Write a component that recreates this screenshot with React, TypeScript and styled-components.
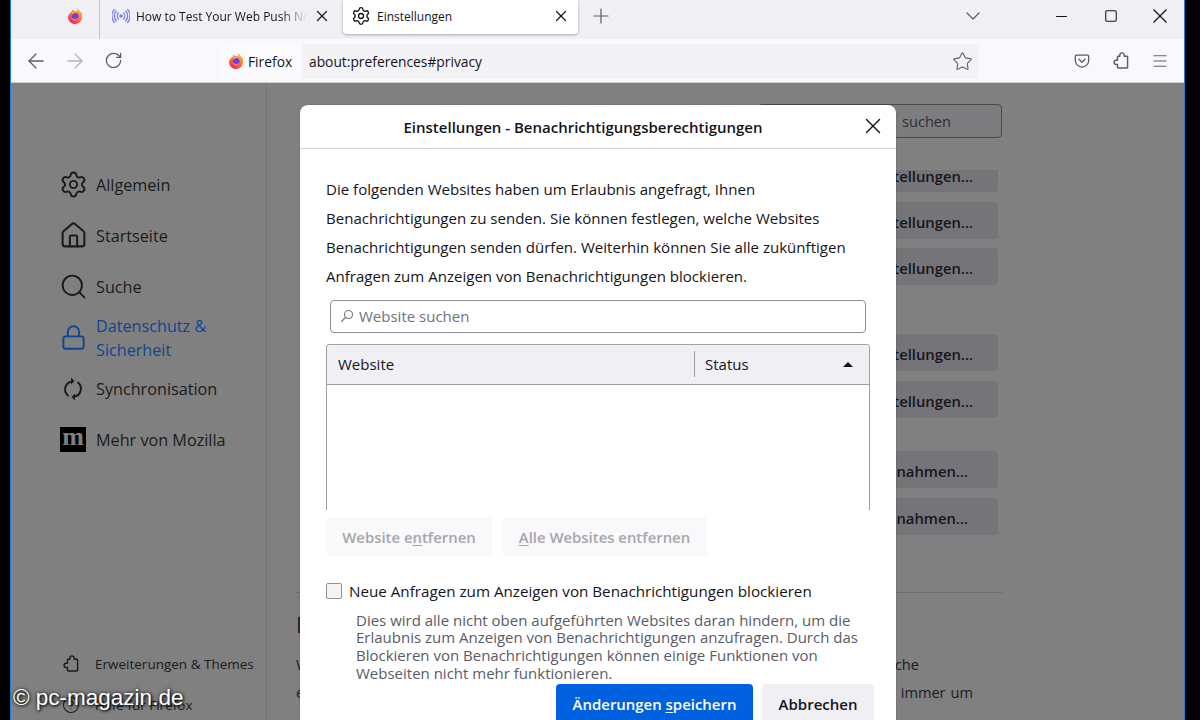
import React from 'react';
import styled, { createGlobalStyle } from 'styled-components';
import { ArrowLeft, ArrowRight, RotateCw, Settings, Star, Menu, X, Plus, ChevronDown, House, Search, Lock, CircleHelp, Minus, Square } from 'lucide-react';

const Global = createGlobalStyle`
  html, body { margin: 0; padding: 0; width: 1200px; height: 720px; overflow: hidden; background: #000; }
  body { font-family: "Open Sans", "Noto Sans", sans-serif; color: #15141a; }
  * { box-sizing: border-box; }
  svg { flex: none; }
`;

const Screen = styled.div`
  position: relative; width: 1200px; height: 720px; overflow: hidden; background: #000;
  padding: 0 15px 0 10px;
`;
const Win = styled.div`
  width: 100%; height: 100%; display: flex; flex-direction: column; overflow: hidden;
  border-left: 1px solid #1f7fd0; border-right: 1px solid #1f7fd0;
`;
const TabStrip = styled.div`
  height: 39px; flex: none; background: #f0f0f4; display: flex; align-items: flex-start; padding-left: 39px;
`;
const PinnedTab = styled.div`
  width: 50px; height: 39px; display: flex; align-items: center; justify-content: center; padding-bottom: 7px;
  border-right: 1px solid #c4c4c8;
`;
const Tab = styled.div<{ $active?: boolean; $w: number }>`
  width: ${p => p.$w}px; height: 34px; display: flex; align-items: center; gap: 6px; padding: 0 ${p => (p.$active ? 8 : 12)}px 2px ${p => (p.$active ? 8 : 12)}px;
  font-size: 12px; color: #15141a;
  background: ${p => (p.$active ? '#fff' : 'transparent')};
  border-radius: ${p => (p.$active ? '0 0 4px 4px' : '0')};
  box-shadow: ${p => (p.$active ? '0 1px 3px rgba(0,0,0,.3)' : 'none')};
`;
const TabLabel = styled.span<{ $fade?: boolean }>`
  flex: 1; white-space: nowrap; overflow: hidden;
  ${p => p.$fade ? 'mask-image: linear-gradient(to right, #000 85%, transparent 100%);' : ''}
`;
const NewTab = styled.div`
  width: 46px; height: 32px; display: flex; align-items: center; justify-content: center; color: #5b5b66;
`;
const StripSpacer = styled.div`flex: 1;`;
const WinButton = styled.div<{ $w?: number }>`
  width: ${p => p.$w ?? 49}px; height: 32px; display: flex; align-items: center; justify-content: center; color: #15141a;
`;
const ListAll = styled(WinButton)`color: #5b5b66; margin-right: 48px;`;

const Toolbar = styled.div`
  height: 44px; flex: none; background: #f9f9fb; display: flex; align-items: center;
  border-bottom: 1px solid #d0d0d4; padding: 0 0 0 6px;
`;
const NavButton = styled.div<{ $dim?: boolean }>`
  width: 38.5px; height: 32px; display: flex; align-items: center; justify-content: center;
  color: ${p => (p.$dim ? '#b4b4b8' : '#5b5b66')};
`;
const UrlBar = styled.div`
  margin-left: 86.5px; width: 760px; height: 35px; background: #f3f3f6; border-radius: 4px;
  display: flex; align-items: center; font-size: 13.8px; margin-top: 1px;
`;
const Identity = styled.div`
  width: 83px; height: 35px; background: #fbfbfd; border-radius: 4px; display: flex; align-items: center; gap: 4px; padding-left: 9px;
  font-size: 13.8px;
`;
const UrlText = styled.span`flex: 1; padding-left: 7px;`;
const StarSlot = styled.div`
  width: 34px; display: flex; justify-content: center; color: #5b5b66;
`;
const ToolIcons = styled.div`
  display: flex; margin-left: 83px; color: #5b5b66;
`;
const ToolIcon = styled.div`
  width: 39px; height: 32px; display: flex; align-items: center; justify-content: center;
`;

const Content = styled.div`
  flex: 1; min-height: 0; display: flex; background: #808080; color: #1b1b1d; overflow: hidden;
`;
const Sidebar = styled.nav`
  width: 256px; flex: none; border-right: 1px solid #747474; padding: 76px 0 0 49px;
`;
const NavItem = styled.div<{ $active?: boolean }>`
  height: 51px; display: flex; align-items: center; gap: 10px; font-size: 16.2px; line-height: 24px;
  color: ${p => (p.$active ? '#0f4592' : '#1b1b1d')};
`;
const NavIcon = styled.div`
  width: 26px; height: 26px; flex: none; display: flex; align-items: center; justify-content: center;
`;
const MozBadge = styled.div`
  width: 26px; height: 25px; background: #000; color: #808080; display: flex; align-items: center; justify-content: center;
  font: 700 26px/20px "Liberation Serif", serif; padding-bottom: 5px;
`;
const SideFooter = styled.div`margin-top: 178px; padding-left: 2px;`;
const FootItem = styled.div`
  height: 41px; display: flex; align-items: center; gap: 15px; font-size: 13.5px; white-space: nowrap;
`;

const Main = styled.main`
  width: 735px; flex: none; padding: 21px 0 0 29px; display: flex; flex-direction: column; align-items: flex-end;
`;
const SearchBox = styled.div`
  width: 244px; height: 34px; flex: none; border: 1px solid #4a4a4e; border-radius: 4px; background: #7d7d7f;
  display: flex; align-items: center; justify-content: flex-end; padding-right: 50px; font-size: 14.6px; color: #2e2e32;
`;
const GhostButton = styled.div<{ $clipped?: boolean; $mt?: number; $pr?: number }>`
  width: 132px; flex: none; margin-right: 4px; height: ${p => (p.$clipped ? 22 : 37)}px; margin-top: ${p => p.$mt ?? 10}px;
  background: #757579; border-radius: ${p => (p.$clipped ? '0 0 4px 4px' : '4px')};
  display: flex; align-items: ${p => (p.$clipped ? 'flex-start' : 'center')}; justify-content: flex-end; padding: ${p => (p.$clipped ? 1 : 2)}px ${p => p.$pr ?? 25}px 0 0;
  font-size: 14.8px; font-weight: 600; color: #16161a; white-space: nowrap; line-height: 10px; overflow: hidden;
`;
const Rule = styled.div`
  width: 100%; flex: none; height: 1px; background: #6c6c6c; margin-top: 57px;
`;
const SectionTitle = styled.h2`
  align-self: flex-start; flex: none; margin: 17px 0 0; font-size: 21px; line-height: 30px; font-weight: 400; white-space: nowrap; color: #1b1b1d;
`;
const BodyLine = styled.div<{ $w: number; $mt: number }>`
  align-self: flex-start; flex: none; width: ${p => p.$w}px; margin-top: ${p => p.$mt}px; font-size: 14.6px; line-height: 20px;
  text-align: justify; text-align-last: justify; white-space: nowrap; color: #1b1b1d;
`;

const Dialog = styled.section`
  position: absolute; left: 300px; top: 105px; width: 596px; height: 640px; background: #fff; border-radius: 8px 8px 0 0;
  box-shadow: 0 0 2px rgba(0,0,0,.25); color: #15141a; overflow: hidden;
`;
const DialogHead = styled.header`
  position: relative; height: 44px; display: flex; align-items: center; justify-content: center; padding-right: 30px;
  border-bottom: 1px solid #cfcfd8; font-size: 15px; font-weight: 600;
`;
const CloseSpot = styled.div`
  position: absolute; right: 13px; top: 11px; width: 20px; height: 20px; display: flex; align-items: center; justify-content: center;
`;
const DialogBody = styled.div`
  padding: 25.5px 26px 0; display: flex; flex-direction: column; align-items: flex-start;
`;
const Intro = styled.p`
  margin: 0; font-size: 15.05px; line-height: 29px; white-space: nowrap;
`;
const FilterField = styled.div`
  margin: 9px 0 0 4px; width: 536px; height: 33px; border: 1px solid #8f8f9d; border-radius: 4px; display: flex; align-items: center;
  padding-left: 9px; gap: 5px; font-size: 15px; color: #72727c;
`;
const Tree = styled.div`
  margin-top: 11px; width: 544px; height: 166px; border: 1px solid #9e9ea6; border-bottom: 0; border-radius: 4px 4px 0 0; overflow: hidden;
`;
const TreeHead = styled.div`
  height: 40px; background: #f0f0f4; border-bottom: 1px solid #9e9ea6; display: grid; grid-template-columns: 368px 1fr; align-items: center;
  font-size: 15px;
`;
const ColWebsite = styled.div`
  height: 26px; line-height: 26px; padding-left: 11px; border-right: 1px solid #9e9ea6;
`;
const ColStatus = styled.div`
  padding: 0 16px 0 10px; display: flex; align-items: center; justify-content: space-between;
`;
const SortArrow = styled.div`
  width: 0; height: 0; border-left: 5px solid transparent; border-right: 5px solid transparent; border-bottom: 5px solid #15141a;
`;
const ButtonRow = styled.div`
  margin-top: 7px; display: flex; gap: 10px;
`;
const DisabledButton = styled.div<{ $w: number }>`
  width: ${p => p.$w}px; height: 39px; background: #f9f9fb; border-radius: 4px; display: flex; align-items: center; justify-content: center;
  color: #a6a6ac; font-size: 14.9px; font-weight: 600; padding-top: 1px;
`;
const Key = styled.span`text-decoration: underline; text-underline-offset: 2px;`;
const CheckRow = styled.label`
  margin-top: 22px; height: 27px; display: flex; align-items: center; gap: 7px; font-size: 15.2px; white-space: nowrap;
`;
const CheckBox = styled.div`
  width: 16px; height: 16px; border: 1px solid #8f8f9d; border-radius: 2px; background: #f4f4f6;
`;
const Description = styled.p`
  margin: 7px 0 0 30px; font-size: 15px; line-height: 17.7px; color: #5b5b66; white-space: nowrap;
`;
const DialogFooter = styled.footer`
  align-self: flex-end; margin: 2px -4px 0 0; display: flex; gap: 9px;
`;
const PrimaryButton = styled.div`
  width: 197px; height: 39px; background: #0061e0; color: #fff; border-radius: 4px; display: flex; align-items: center; justify-content: center;
  font-size: 14.95px; font-weight: 600;
`;
const SecondaryButton = styled.div`
  width: 112px; height: 39px; background: #f0f0f4; border-radius: 4px; display: flex; align-items: center; justify-content: center;
  font-size: 15px; font-weight: 600;
`;
const Watermark = styled.div`
  position: absolute; left: 13px; top: 684px; font: 400 22.5px/28px "Liberation Sans", Arial, sans-serif; color: #fff;
  text-shadow: 1px 1px 3px #000, 0 0 4px rgba(0,0,0,.7); white-space: nowrap;
`;

const Firefox: React.FC<{ size?: number }> = ({ size = 16 }) => (
  <svg width={size} height={size} viewBox="0 0 16 16">
    <defs>
      <linearGradient id="ffo" x1="0.8" y1="0" x2="0.2" y2="1">
        <stop offset="0" stopColor="#ffbd4f" />
        <stop offset=".5" stopColor="#ff7139" />
        <stop offset="1" stopColor="#f5156c" />
      </linearGradient>
    </defs>
    <path d="M14.900 5.400c-.3-.8-1-1.700-1.500-2 .4.800.7 1.600.8 2.100-.9-2.200-2.300-3-3.500-4.900-.1-.1-.1-.2-.2-.3-.7 1.200-.3 2.600.2 3.200C9.800 3 8.700 2.800 7.800 3.100 6.900 2.600 6.100 2.500 5.400 1.500c-.4.500-.5 1.300-.4 1.900-.6.300-1.200.900-1.500 1.300C2 5.500.9 8 1.100 10c.5 3.400 3.400 6 6.900 6 3.900 0 7-3.100 7-7 0-1.300-.3-2.600-.1-3.600z" fill="url(#ffo)" />
    <circle cx="8.200" cy="8.500" r="3.400" fill="#6f3fe2" />
    <path d="M4.400 9c.3 2.100 2.100 3.400 3.900 3.200 1.600-.2 2.800-1.400 3.100-2.900-.8 1.300-2.400 2-4 1.600C6.200 10.600 5 9.900 4.400 9z" fill="#ff9640" />
    <path d="M5 4.500c1.200-.6 2.800-.5 4 .4-1.300-.1-2.700.300-3 1.500-.8-.4-1-1.200-1-1.900z" fill="#ffb03a" />
  </svg>
);
const Broadcast = () => (
  <svg width="18" height="18" viewBox="0 0 18 18" fill="none" stroke="#7b7bf0" strokeWidth="1.300" strokeLinecap="round">
    <circle cx="9" cy="9" r="1.700" fill="#7b7bf0" stroke="none" />
    <path d="M6.400 6a4.300 4.300 0 0 0 0 6M11.600 6a4.300 4.300 0 0 1 0 6" />
    <path d="M4.300 4a7.200 7.200 0 0 0 0 10M13.700 4a7.200 7.200 0 0 1 0 10" />
    <path d="M2.400 2.400a9.800 9.800 0 0 0 0 13.200M15.600 2.400a9.800 9.800 0 0 1 0 13.200" />
  </svg>
);
const Pocket = () => (
  <svg width="16" height="16" viewBox="0 0 16 16" fill="none" stroke="currentColor" strokeWidth="1.300" strokeLinecap="round" strokeLinejoin="round">
    <path d="M2.500 2.200h11c.7 0 1.200.5 1.200 1.200v4a6.700 6.700 0 0 1-13.400 0v-4c0-.7.5-1.200 1.200-1.200z" />
    <path d="M5 6.300l3 2.900 3-2.900" />
  </svg>
);
const Puzzle: React.FC<{ size?: number }> = ({ size = 18 }) => (
  <svg width={size} height={size} viewBox="0 0 18 18" fill="none" stroke="currentColor" strokeWidth="1.400" strokeLinejoin="round" strokeLinecap="round">
    <path d="M7.800 4.300V3.100a2.200 2.200 0 0 1 4.400 0v1.200h2.700c.4 0 .7.300.7.700v10.300c0 .4-.3.700-.7.700H6.200c-.4 0-.7-.3-.7-.7v-2.800H4.200a2.100 2.100 0 0 1 0-4.200h1.300V5c0-.4.300-.7.700-.7z" />
  </svg>
);
const Sync = () => (
  <svg width="26" height="26" viewBox="0 0 26 26" fill="none" stroke="currentColor" strokeWidth="2" strokeLinecap="round">
    <path d="M8 19.500A8 8 0 0 1 12 5.400" />
    <path d="M18 6.500a8 8 0 0 1-4 14.100" />
    <path d="M11 1.500l3.500 3.500-3.500 3.500z" fill="currentColor" stroke="none" />
    <path d="M15 24.500L11.500 21l3.500-3.500z" fill="currentColor" stroke="none" />
  </svg>
);
const MagnifierSmall = () => (
  <svg width="14" height="14" viewBox="0 0 14 14" fill="none" stroke="#72727c" strokeWidth="1.100" strokeLinecap="round">
    <circle cx="8.500" cy="5.500" r="4" />
    <path d="M5.500 8.500L1.500 12.500" />
  </svg>
);

export default function App() {
  return (
    <Screen>
      <Global />
      <Win>
        <TabStrip>
          <PinnedTab><Firefox /></PinnedTab>
          <Tab $w={243}>
            <Broadcast />
            <TabLabel $fade>How to Test Your Web Push Notifications</TabLabel>
            <X size={18} strokeWidth={1.6} />
          </Tab>
          <Tab $active $w={235}>
            <Settings size={20} strokeWidth={1.6} />
            <TabLabel>Einstellungen</TabLabel>
            <X size={18} strokeWidth={1.6} />
          </Tab>
          <NewTab><Plus size={24} strokeWidth={1.2} /></NewTab>
          <StripSpacer />
          <ListAll $w={32}><ChevronDown size={24} strokeWidth={1.2} /></ListAll>
          <WinButton><Minus size={17} strokeWidth={1.6} /></WinButton>
          <WinButton><Square size={14} strokeWidth={1.8} /></WinButton>
          <WinButton><X size={24} strokeWidth={1.3} /></WinButton>
        </TabStrip>
        <Toolbar>
          <NavButton><ArrowLeft size={24} strokeWidth={1.3} /></NavButton>
          <NavButton $dim><ArrowRight size={24} strokeWidth={1.3} /></NavButton>
          <NavButton><RotateCw size={19} strokeWidth={1.6} /></NavButton>
          <UrlBar>
            <Identity><Firefox />Firefox</Identity>
            <UrlText>about:preferences#privacy</UrlText>
            <StarSlot><Star size={21} strokeWidth={1.2} /></StarSlot>
          </UrlBar>
          <ToolIcons>
            <ToolIcon><Pocket /></ToolIcon>
            <ToolIcon><Puzzle /></ToolIcon>
            <ToolIcon><Menu size={18} strokeWidth={1.3} /></ToolIcon>
          </ToolIcons>
        </Toolbar>
        <Content>
          <Sidebar>
            <NavItem><NavIcon><Settings size={29} strokeWidth={1.6} /></NavIcon>Allgemein</NavItem>
            <NavItem><NavIcon><House size={29} strokeWidth={1.7} /></NavIcon>Startseite</NavItem>
            <NavItem><NavIcon><Search size={29} strokeWidth={1.6} /></NavIcon>Suche</NavItem>
            <NavItem $active><NavIcon><Lock size={27} strokeWidth={1.7} /></NavIcon><span>Datenschutz &amp;<br />Sicherheit</span></NavItem>
            <NavItem><NavIcon><Sync /></NavIcon>Synchronisation</NavItem>
            <NavItem><NavIcon><MozBadge>m</MozBadge></NavIcon>Mehr von Mozilla</NavItem>
            <SideFooter>
              <FootItem><Puzzle size={18} />Erweiterungen &amp; Themes</FootItem>
              <FootItem><CircleHelp size={18} strokeWidth={1.4} />Hilfe für Firefox</FootItem>
            </SideFooter>
          </Sidebar>
          <Main>
            <SearchBox>suchen</SearchBox>
            <GhostButton $clipped $mt={32}>Einstellungen...</GhostButton>
            <GhostButton>Einstellungen...</GhostButton>
            <GhostButton $mt={9}>Einstellungen...</GhostButton>
            <GhostButton $mt={49}>Einstellungen...</GhostButton>
            <GhostButton>Einstellungen...</GhostButton>
            <GhostButton $mt={33} $pr={30}>Ausnahmen...</GhostButton>
            <GhostButton $pr={30}>Ausnahmen...</GhostButton>
            <Rule />
            <SectionTitle>Datenerhebung durch Firefox und deren Verwendung</SectionTitle>
            <BodyLine $w={623} $mt={14}>Wir lassen Ihnen die Wahl, ob Sie uns Daten senden, und sammeln nur die Daten, welche</BodyLine>
            <BodyLine $w={677} $mt={8}>erforderlich sind, um Firefox für jeden anbieten und verbessern zu können. Wir fragen immer um</BodyLine>
          </Main>
        </Content>
      </Win>
      <Dialog>
        <DialogHead>
          Einstellungen - Benachrichtigungsberechtigungen
          <CloseSpot><X size={26} strokeWidth={1.3} /></CloseSpot>
        </DialogHead>
        <DialogBody>
          <Intro>
            Die folgenden Websites haben um Erlaubnis angefragt, Ihnen<br />
            Benachrichtigungen zu senden. Sie können festlegen, welche Websites<br />
            Benachrichtigungen senden dürfen. Weiterhin können Sie alle zukünftigen<br />
            Anfragen zum Anzeigen von Benachrichtigungen blockieren.
          </Intro>
          <FilterField><MagnifierSmall />Website suchen</FilterField>
          <Tree>
            <TreeHead>
              <ColWebsite>Website</ColWebsite>
              <ColStatus>Status<SortArrow /></ColStatus>
            </TreeHead>
          </Tree>
          <ButtonRow>
            <DisabledButton $w={166}><span>Website e<Key>n</Key>tfernen</span></DisabledButton>
            <DisabledButton $w={205}><span><Key>A</Key>lle Websites entfernen</span></DisabledButton>
          </ButtonRow>
          <CheckRow><CheckBox />Neue Anfragen zum Anzeigen von Benachrichtigungen blockieren</CheckRow>
          <Description>
            Dies wird alle nicht oben aufgeführten Websites daran hindern, um die<br />
            Erlaubnis zum Anzeigen von Benachrichtigungen anzufragen. Durch das<br />
            Blockieren von Benachrichtigungen können einige Funktionen von<br />
            Webseiten nicht mehr funktionieren.
          </Description>
          <DialogFooter>
            <PrimaryButton><span>Änderungen <Key>s</Key>peichern</span></PrimaryButton>
            <SecondaryButton>Abbrechen</SecondaryButton>
          </DialogFooter>
        </DialogBody>
      </Dialog>
      <Watermark>© pc-magazin.de</Watermark>
    </Screen>
  );
}
